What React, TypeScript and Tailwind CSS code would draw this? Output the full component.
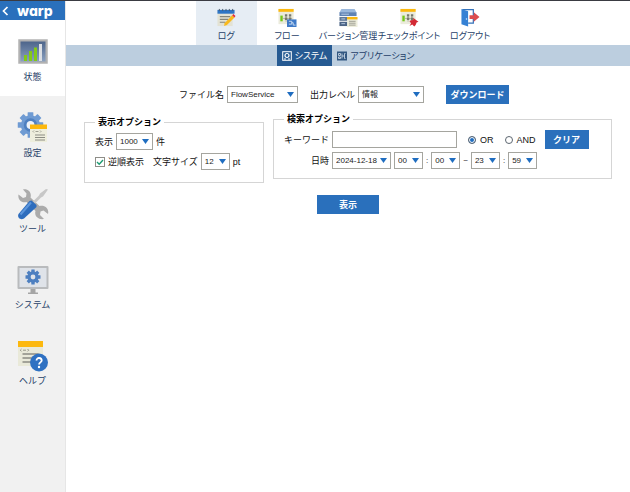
import { useState } from 'react';
import type { ReactNode } from 'react';

const StatusIcon = () => (
  <svg viewBox="0 0 32 32" className="h-8 w-8">
    <defs>
      <linearGradient id="screen" x1="0" y1="0" x2="0" y2="1">
        <stop offset="0" stopColor="#4d658b" />
        <stop offset="1" stopColor="#8ba1c0" />
      </linearGradient>
    </defs>
    <rect x="1" y="3" width="30" height="25" rx="1" fill="#c6c6c6" />
    <rect x="2" y="4" width="28" height="23" fill="#b2b2b2" />
    <rect x="3.500" y="5.500" width="25" height="20" fill="url(#screen)" />
    <path d="M7 19h3v6H7zM12 15h3v10h-3zM17 11.500h3V25h-3z" fill="#84c818" />
    <rect x="22" y="8" width="3" height="17" fill="#dcdfe3" />
  </svg>
);

const Gear = ({ x, y, scale, fill, hole }: { x: number; y: number; scale: number; fill: string; hole: string }) => (
  <g transform={`translate(${x} ${y}) scale(${scale})`}>
    <g fill={fill}>
      <circle r="9.500" />
      {[0, 45, 90, 135].map((a) => (
        <rect key={a} x="-2.800" y="-12.500" width="5.600" height="25" rx="0.500" transform={`rotate(${a})`} />
      ))}
    </g>
    <circle r="4" fill={hole} />
  </g>
);

const SettingsIcon = () => (
  <svg viewBox="0 0 32 32" className="h-8 w-8">
    <Gear x={13.500} y={13} scale={1.020} fill="#6f9bd3" hole="#eef2f8" />
    <circle cx="13.500" cy="13" r="5.500" stroke="#4f80c0" strokeWidth="2.500" fill="none" />
    <rect x="13" y="13" width="17" height="17" fill="#eeeedd" />
    <rect x="13" y="12.500" width="17" height="4.500" fill="#fcb80e" />
    <path d="M17 18.500l-1 1 1 1M18.500 19.500h3M23 18.500l1 1-1 1" stroke="#8c8c80" strokeWidth="0.800" fill="none" />
    <path d="M18 23h10M18 25.500h10M18 28h10" stroke="#8c8c84" strokeWidth="1.200" />
  </svg>
);

const ToolIcon = () => (
  <svg viewBox="0 0 32 32" className="h-8 w-8">
    <path d="M6 1.500c5-1 9 3 7.500 8l9 8.500c5-1.500 10 2.500 8.500 8l-4.500-3.500-3 1-.5 3.500 4 4c-6 1-10-3-8.500-8L9.500 14C4.500 15.500.5 11.500 1.500 6.500L6 10l3-1 .5-3.500z" fill="#ababab" />
    <path d="M31 1.500l-2-.5-6 4.500-1 2-6 6 2 2 6-6 2-1z" fill="#c7c7c7" />
    <path d="M14.500 12.500l5 4.500v2L7 30.500c-4 2-7-1-5.500-4.500l11-13z" fill="#2e6dbd" />
    <path d="M14 14.500L3.500 26.500" stroke="#5c96dc" strokeWidth="2" />
  </svg>
);

const SystemIcon = () => (
  <svg viewBox="0 0 32 32" className="h-8 w-8">
    <path d="M13.500 24h5v4.500H21v1.500H11v-1.500h2.500z" fill="#a5a5a5" />
    <rect x="0.500" y="2" width="31" height="23" rx="1" fill="#b9bbbd" />
    <rect x="2.500" y="4" width="27" height="19" fill="#dfe3e9" />
    <Gear x={16} y={13} scale={0.600} fill="#4d7fc0" hole="#dfe3e9" />
  </svg>
);

const HelpIcon = () => (
  <svg viewBox="0 0 32 32" className="h-8 w-8">
    <rect x="1" y="1" width="25" height="25" fill="#e9e9d9" />
    <rect x="1" y="1" width="25" height="6" fill="#fcb80e" />
    <path d="M4.500 9l-1.200 1.200 1.200 1.200M6 10.200h3M10.500 9l1.200 1.200-1.200 1.200" stroke="#8c8c80" strokeWidth="0.900" fill="none" />
    <path d="M5.500 14h16M5.500 18h12M5.500 22h9" stroke="#8c8c84" strokeWidth="1.300" />
    <circle cx="22" cy="22.500" r="9" fill="#2f71c2" />
    <path d="M19.500 20.500c0-3.500 5.200-3.200 5.200 0 0 2-2.600 1.800-2.600 4" stroke="#fff" strokeWidth="1.800" fill="none" />
    <circle cx="22" cy="27" r="1.200" fill="#fff" />
  </svg>
);

const LogIcon = () => (
  <svg viewBox="0 0 20 20" className="h-5 w-5">
    <rect x="1" y="4" width="16" height="15" fill="#e3e2d4" />
    <rect x="1" y="2" width="18" height="4" fill="#2e75c5" />
    <path d="M3 1v2M6.500 1v2M10 1v2M13.500 1v2M17 1v2" stroke="#4b5763" strokeWidth="1" />
    <path d="M3.500 9h11M3.500 12h9M3.500 15h6" stroke="#858579" strokeWidth="1.300" />
    <path d="M16.500 7.500l2.500 2.500-8 8-3 1 .5-3z" fill="#f9b91c" />
    <path d="M16.500 7.500l1.300-1.300 2.200 2.300-1.200 1.500z" fill="#e3293b" />
  </svg>
);

const FlowPaper = () => (
  <>
    <rect x="1" y="1" width="16" height="16" fill="#ebebdc" />
    <rect x="1" y="1" width="16" height="3" fill="#fcb80e" />
    <rect x="3" y="8" width="2.500" height="6" fill="#74c71a" />
    <path d="M5.500 11h10M9 7.500v7M13 7.500v7" stroke="#a5a598" strokeWidth="0.800" />
    <path d="M7.800 6.500h2.500V9H7.800zM12 6.500h2.500V9H12zM7.800 10h2.500v2.500H7.800zM12 10h2.500v2.500H12z" fill="#77796f" />
  </>
);

const FlowIcon = () => (
  <svg viewBox="0 0 20 20" className="h-5 w-5">
    <FlowPaper />
    <rect x="10" y="12" width="10" height="8" fill="#3f7ac8" />
    <path d="M12 14h3v3h-3M15 15.500h1.500V18H19" stroke="#d5e4f5" strokeWidth="0.900" fill="none" />
  </svg>
);

const VersionIcon = () => (
  <svg viewBox="0 0 20 20" className="h-5 w-5">
    <path d="M3 1h14l2 4H1z" fill="#9bb8dc" />
    <rect x="1" y="4.500" width="18" height="4" fill="#6083b4" />
    <rect x="1" y="9.500" width="18" height="4" fill="#607795" />
    <rect x="1" y="14.500" width="18" height="4.500" fill="#4b6486" />
    <path d="M3 6.500h8M3 11.500h4M3 16.500h4" stroke="#b9cbe3" strokeWidth="1" />
    <rect x="9" y="10" width="11" height="10" fill="#eeeedd" />
    <rect x="9" y="9.500" width="11" height="2.500" fill="#fcb80e" />
    <path d="M11 14h7M11 16h7M11 18h7" stroke="#909087" strokeWidth="0.900" />
  </svg>
);

const CheckpointIcon = () => (
  <svg viewBox="0 0 20 20" className="h-5 w-5">
    <FlowPaper />
    <path d="M14.500 10.500l5.500 4-2 .8-1 2.700-1.500 1.500-2-2.200-3 1.700 1.700-3L10.500 14l1.500-1 2.500-.5z" fill="#d32934" />
  </svg>
);

const LogoutIcon = () => (
  <svg viewBox="0 0 20 20" className="h-5 w-5">
    <path d="M2 1.700h11.500V16H8" fill="#fff" stroke="#3371b9" strokeWidth="1.300" />
    <path d="M1 1l7 2.500V19.500L1 17z" fill="#3581d4" />
    <circle cx="6.300" cy="11.500" r="0.800" fill="#dcebfa" />
    <path d="M9.500 7.500H14V4.500l6 5-6 5v-3H9.500z" fill="#dc4c4e" />
  </svg>
);

const sideItems: { label: string; icon: ReactNode }[] = [
  { label: '状態', icon: <StatusIcon /> },
  { label: '設定', icon: <SettingsIcon /> },
  { label: 'ツール', icon: <ToolIcon /> },
  { label: 'システム', icon: <SystemIcon /> },
  { label: 'ヘルプ', icon: <HelpIcon /> },
];

const navItems: { label: string; icon: ReactNode }[] = [
  { label: 'ログ', icon: <LogIcon /> },
  { label: 'フロー', icon: <FlowIcon /> },
  { label: 'バージョン管理', icon: <VersionIcon /> },
  { label: 'チェックポイント', icon: <CheckpointIcon /> },
  { label: 'ログアウト', icon: <LogoutIcon /> },
];

const Select = ({ id, label, options, width }: { id: string; label?: string; options: string[]; width: string }) => (
  <span className={`relative inline-flex ${width}`}>
    <select
      id={id}
      aria-label={label}
      className="h-[17px] w-full appearance-none border border-[#a5a59f] bg-white pl-[3px] text-[8px] leading-[15px] text-[#222]"
    >
      {options.map((o) => (
        <option key={o}>{o}</option>
      ))}
    </select>
    <svg viewBox="0 0 7 5" className="pointer-events-none absolute top-1.5 right-1 h-[5px] w-[7px]">
      <path d="M0 0h7L3.500 5z" fill="#1f6dc0" />
    </svg>
  </span>
);

const Button = ({ children, width }: { children: ReactNode; width: string }) => (
  <button type="button" className={`h-[19px] bg-[#2a70bc] text-[9px] leading-[18px] font-bold text-white ${width}`}>
    {children}
  </button>
);

const App = () => {
  const [match, setMatch] = useState('or');
  const [reverse, setReverse] = useState(true);

  return (
    <div className="flex min-h-screen flex-col border-t border-[#3a3b42] bg-white font-['Liberation_Sans','Noto_Sans_CJK_JP',sans-serif] text-[9px] leading-4 text-[#111]">
      <div className="flex flex-1">
        <aside className="w-[66px] shrink-0 border-r border-[#e6e6e6] bg-[#f1f1f1]">
          <a href="#home" className="flex h-[19px] items-center gap-2 bg-[#2a70bc] pl-0.5 text-white">
            <svg viewBox="0 0 7 10" className="h-2.5 w-[7px]">
              <path d="M5.500 1L1.500 5l4 4" fill="none" stroke="#fff" strokeWidth="1.700" />
            </svg>
            <span className="font-['Inter',sans-serif] text-[14px] leading-4 font-extrabold [font-feature-settings:'cv11']">warp</span>
          </a>
          <nav>
            {sideItems.map((item, i) => (
              <a
                key={item.label}
                href="#side"
                className={`flex h-[76px] flex-col items-center pt-4 text-[#1f3f68] ${i === 0 ? 'bg-white' : ''}`}
              >
                {item.icon}
                <span className="leading-[18px]">{item.label}</span>
              </a>
            ))}
          </nav>
        </aside>

        <main className="min-w-0 flex-1">
          <nav className="flex justify-center">
            {navItems.map((item, i) => (
              <a
                key={item.label}
                href="#nav"
                className={`flex h-11 w-[61px] flex-col items-center pt-[7px] whitespace-nowrap text-[#1f3f68] [font-feature-settings:'palt'] ${i === 0 ? 'bg-[#e6edf4]' : ''}`}
              >
                {item.icon}
                <span className="leading-[18px]">{item.label}</span>
              </a>
            ))}
          </nav>
          <div className="flex h-[21px] justify-center bg-[#bccedf] text-[#1f3f68] [font-feature-settings:'palt']">
            <a href="#system" className="flex items-center gap-[3px] bg-[#265a92] px-[5px] text-white">
              <svg viewBox="0 0 10 10" className="h-2.5 w-2.5">
                <rect x="0.700" y="0.700" width="8.600" height="8.600" fill="none" stroke="#fff" strokeWidth="1" />
                <circle cx="5" cy="4.500" r="2" fill="none" stroke="#fff" strokeWidth="1.200" />
                <path d="M2 8h2M6 8h2" stroke="#fff" strokeWidth="1" />
              </svg>
              システム
            </a>
            <a href="#application" className="flex items-center gap-[3px] px-[5px]">
              <svg viewBox="0 0 10 10" className="h-2.5 w-2.5">
                <rect width="10" height="9" y="0.500" fill="#315781" />
                <path d="M1.500 2.500h2v2h-2zM1.500 6h2v1.500h-2zM5 2.500v5M8.500 2.500h-1v5h1M5 5h2.500" stroke="#d3e0ed" strokeWidth="0.800" fill="none" />
              </svg>
              アプリケーション
            </a>
          </div>

          <form className="px-[18px] pt-[19px]">
            <div className="flex items-center justify-center pr-2">
              <label htmlFor="file" className="mr-[3px]">ファイル名</label>
              <Select id="file" options={['FlowService', 'System']} width="w-[71px]" />
              <label htmlFor="level" className="mr-[3px] ml-3">出力レベル</label>
              <Select id="level" options={['情報', '警告', 'エラー']} width="w-[66px]" />
              <span className="ml-[22px] flex">
                <Button width="w-[63px]">ダウンロード</Button>
              </span>
            </div>

            <div className="mt-[7px] flex items-start gap-[9px]">
              <fieldset className="mt-[3px] w-[180px] shrink-0 border border-[#d5d5d5] px-2.5 pb-3 whitespace-nowrap">
                <legend className="px-[3px] font-bold text-black">表示オプション</legend>
                <div className="mt-[3px] flex items-center gap-[3px]">
                  <label htmlFor="rows">表示</label>
                  <Select id="rows" options={['1000', '500', '100']} width="w-[37px]" />
                  <span>件</span>
                </div>
                <div className="mt-[3px] flex items-center gap-[3px]">
                  <label className="mr-1.5 flex items-center gap-[3px]">
                    <span className="relative flex">
                      <input
                        type="checkbox"
                        checked={reverse}
                        onChange={(e) => setReverse(e.target.checked)}
                        className="peer h-2.5 w-2.5 appearance-none border border-[#8e8e88] bg-white"
                      />
                      <svg viewBox="0 0 10 10" className="pointer-events-none absolute inset-0 hidden h-2.5 w-2.5 peer-checked:block">
                        <path d="M2 5l2.200 2.200L8 3" fill="none" stroke="#1b9c72" strokeWidth="1.400" />
                      </svg>
                    </span>
                    逆順表示
                  </label>
                  <label htmlFor="size">文字サイズ</label>
                  <Select id="size" options={['12', '14', '16']} width="w-[29px]" />
                  <span>pt</span>
                </div>
              </fieldset>

              <fieldset className="min-w-0 flex-1 border border-[#d5d5d5] px-2.5 pb-[9px] whitespace-nowrap">
                <legend className="px-[3px] font-bold text-black">検索オプション</legend>
                <div className="mt-[3px] flex items-center gap-[3px]">
                  <label htmlFor="keyword" className="w-[45px] text-right">キーワード</label>
                  <input id="keyword" type="text" className="h-[17px] w-[125px] border border-[#a5a59f] bg-white px-1 text-[8px]" />
                  {['or', 'and'].map((value) => (
                    <label key={value} className="ml-2 flex items-center gap-1">
                      <input
                        type="radio"
                        name="match"
                        value={value}
                        checked={match === value}
                        onChange={() => setMatch(value)}
                        className="h-2 w-2 appearance-none rounded-full border border-[#5c6670] bg-white checked:bg-[#1f6dc0] checked:shadow-[inset_0_0_0_1px_white]"
                      />
                      {value.toUpperCase()}
                    </label>
                  ))}
                  <span className="ml-1.5 flex">
                    <Button width="w-[44px]">クリア</Button>
                  </span>
                </div>
                <div className="mt-[3px] flex items-center gap-[3px]">
                  <label htmlFor="date" className="w-[45px] text-right">日時</label>
                  <Select id="date" options={['2024-12-18', '2024-12-17']} width="w-[59px]" />
                  <Select id="from-hour" label="開始時" options={['00', '12']} width="w-[29px]" />
                  <span className="text-[8px]">:</span>
                  <Select id="from-min" label="開始分" options={['00', '30']} width="w-[29px]" />
                  <span className="text-[8px]">~</span>
                  <Select id="to-hour" label="終了時" options={['23', '12']} width="w-[29px]" />
                  <span className="text-[8px]">:</span>
                  <Select id="to-min" label="終了分" options={['59', '30']} width="w-[29px]" />
                </div>
              </fieldset>
            </div>

            <div className="mt-3 flex justify-center">
              <Button width="w-[62px]">表示</Button>
            </div>
          </form>
        </main>
      </div>
    </div>
  );
};

export default App;
